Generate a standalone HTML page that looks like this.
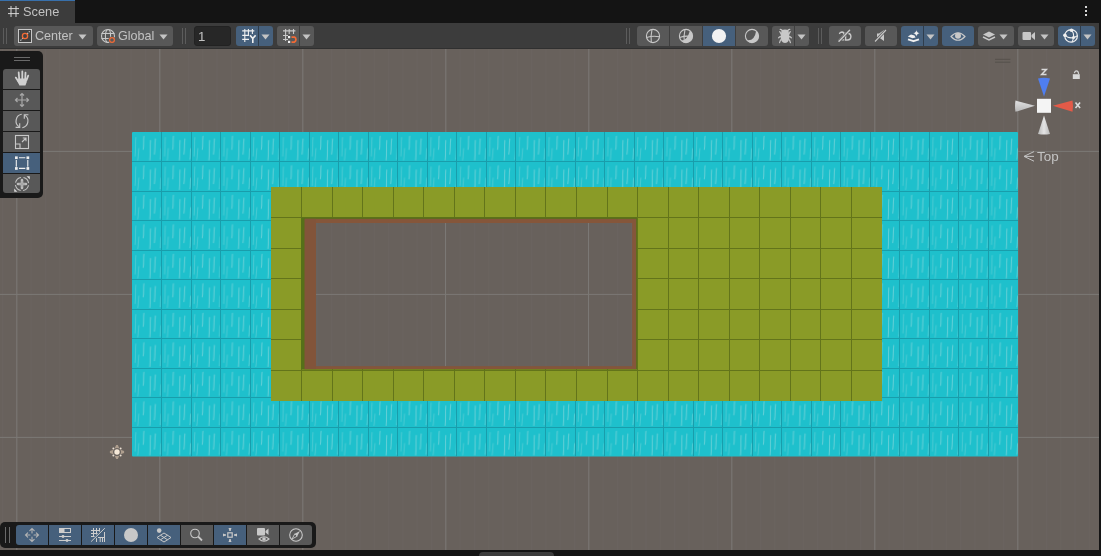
<!DOCTYPE html>
<html><head><meta charset="utf-8">
<style>
*{box-sizing:border-box}
html,body{margin:0;padding:0}
body{width:1101px;height:556px;background:#141414;overflow:hidden;position:relative;font-family:"Liberation Sans",sans-serif;color:#c4c4c4}
.a{position:absolute}
.tab{left:0;top:0;width:75px;height:23px;background:#3c3c3c;border-top:1px solid #3870ab}
.tb{left:0;top:23px;width:1099px;height:25.5px;background:#3c3c3c;border-bottom:1px solid #303030}
.btn{position:absolute;top:26px;height:20px;background:#585858;border-radius:3px}
.sel{background:#46607c}
.scene{left:0;top:48px;width:1099px;height:502px;background:#68615c;overflow:hidden}
.grip{position:absolute;width:1px;background:#5c5c5c}
.txt{position:absolute;font-size:12.5px;color:#c2c2c2;white-space:nowrap;-webkit-font-smoothing:antialiased;will-change:transform}
</style></head><body>

<!-- tab strip -->
<div class="a tab"></div>
<div class="txt" style="left:23.3px;top:4.0px;font-size:12.8px">Scene</div>
<svg class="a" style="left:7px;top:5px" width="13" height="13" viewBox="0 0 13 13"><g stroke="#d4d4d4" stroke-width="1" fill="none"><path d="M4 1V12M9 1V12M1 3.6H12M1 8.6H12"/></g></svg>
<div class="a" style="left:1085px;top:6px;width:2px;height:2px;background:#d8d8d8"></div>
<div class="a" style="left:1085px;top:10px;width:2px;height:2px;background:#d8d8d8"></div>
<div class="a" style="left:1085px;top:14px;width:2px;height:2px;background:#d8d8d8"></div>

<!-- scene -->
<div class="a scene">
<svg width="1099" height="502" viewBox="0 48 1099 502" style="position:absolute;left:0;top:0">
  <defs>
    <pattern id="minor" x="16.3" y="7.9" width="14.3" height="14.3" patternUnits="userSpaceOnUse">
      <path d="M0.5 0V14.3" stroke="#6a635f" stroke-width="1"/>
    </pattern>
    <pattern id="major" x="16.3" y="7.9" width="143" height="143" patternUnits="userSpaceOnUse">
      <path d="M0.5 0V143M0 0.5H143" stroke="#7b7875" stroke-width="1"/>
    </pattern>
    <pattern id="water" x="132" y="132" width="29.533" height="29.5" patternUnits="userSpaceOnUse">
      <rect width="29.533" height="29.5" fill="#1ec0cc"/>
      <g stroke="#62cfd6" stroke-width="1.05" fill="none" stroke-linecap="round">
        <path d="M3.8 5.5C3.1 11 3.9 17 3.1 24" opacity="0.6"/>
        <path d="M6.8 16.5C6.2 21 6.5 24 5.8 28" opacity="0.6"/>
        <path d="M11.9 4.2C11.3 9 12 13 11.2 17.4"/>
        <path d="M18.5 8.5C17.8 15 18.7 21 17.9 28"/>
        <path d="M23.4 6.8C22.7 12 23.3 17 22.4 22.2"/>
        <path d="M29.2 16.6C28.6 21 29.1 24 28.4 27.2" opacity="0.8"/>
      </g>
    </pattern>
    <clipPath id="holeclip"><rect x="316" y="223" width="316.2" height="143.2"/></clipPath>
  </defs>
  <rect x="0" y="48.5" width="1099" height="502" fill="#68615c"/>
  <rect x="0" y="48.5" width="1099" height="502" fill="url(#minor)"/>
  <rect x="0" y="48.5" width="1099" height="502" fill="url(#major)"/>
  <rect x="132" y="132" width="886" height="324.5" fill="url(#water)" rx="1"/>
  <path d="M161.5 132V456.5M191.5 132V456.5M220.5 132V456.5M250.5 132V456.5M279.5 132V456.5M309.5 132V456.5M338.5 132V456.5M368.5 132V456.5M397.5 132V456.5M427.5 132V456.5M456.5 132V456.5M486.5 132V456.5M515.5 132V456.5M545.5 132V456.5M575.5 132V456.5M604.5 132V456.5M634.5 132V456.5M663.5 132V456.5M693.5 132V456.5M722.5 132V456.5M752.5 132V456.5M781.5 132V456.5M811.5 132V456.5M840.5 132V456.5M870.5 132V456.5M899.5 132V456.5M929.5 132V456.5M958.5 132V456.5M988.5 132V456.5M132 161.5H1018M132 191.5H1018M132 220.5H1018M132 250.5H1018M132 279.5H1018M132 309.5H1018M132 338.5H1018M132 368.5H1018M132 397.5H1018M132 427.5H1018" stroke="#199dab" stroke-width="1"/>
  <rect x="271" y="187" width="611" height="214" fill="#8a9b27"/>
  <path d="M301.5 187V401M332.5 187V401M362.5 187V401M393.5 187V401M423.5 187V401M454.5 187V401M484.5 187V401M515.5 187V401M545.5 187V401M576.5 187V401M607.5 187V401M637.5 187V401M668.5 187V401M698.5 187V401M729.5 187V401M759.5 187V401M790.5 187V401M820.5 187V401M851.5 187V401M271 217.5H882M271 248.5H882M271 278.5H882M271 309.5H882M271 339.5H882M271 370.5H882" stroke="#63741a" stroke-width="1"/>
  <rect x="301" y="217.5" width="336" height="152" fill="#567018"/>
  <rect x="304.7" y="218.8" width="331.5" height="150.3" fill="#85563a"/>
  <rect x="304.7" y="218.8" width="11.3" height="150.3" fill="#82543a"/>
  <rect x="316" y="223" width="316.2" height="143.2" fill="#68615c"/>
  <g clip-path="url(#holeclip)">
    <rect x="316" y="223" width="316.2" height="143.2" fill="url(#minor)"/>
    <path d="M445.5 223V366.2M588.5 223V366.2M316 294.4H632.2" stroke="#7b7875" stroke-width="1"/>
  </g>
</svg>
</div>
<!-- toolbar -->
<div class="a tb"></div>
<div class="grip" style="left:2.8px;top:28px;height:16px"></div><div class="grip" style="left:5.9px;top:28px;height:16px"></div>
<div class="btn" style="left:14px;width:79.0px;border-radius:3px"></div>
<div class="btn" style="left:97px;width:76.0px;border-radius:3px"></div>
<div class="grip" style="left:181.9px;top:28px;height:16px"></div><div class="grip" style="left:185.0px;top:28px;height:16px"></div>
<div class="a" style="left:194px;top:26px;width:36.7px;height:19.7px;background:#272727;border:1px solid #222;border-radius:3px"></div>
<div class="txt" style="left:198.3px;top:28.6px;font-size:13.2px">1</div>
<div class="btn sel" style="left:236px;width:36.6px;border-radius:3px"></div>
<div class="a" style="left:257.7px;top:26px;width:1px;height:20px;background:#2f3d4c"></div>
<div class="btn" style="left:277px;width:36.7px;border-radius:3px"></div>
<div class="a" style="left:299.1px;top:26px;width:1px;height:20px;background:#3e3e3e"></div>
<div class="grip" style="left:626.0px;top:28px;height:16px"></div><div class="grip" style="left:629.1px;top:28px;height:16px"></div>
<div class="btn" style="left:637px;width:130.7px;border-radius:3px"></div>
<div class="btn sel" style="left:702.4px;width:33.1px;border-radius:0"></div>
<div class="a" style="left:669.0px;top:26px;width:1px;height:20px;background:#3e3e3e"></div>
<div class="a" style="left:701.9px;top:26px;width:1px;height:20px;background:#3e3e3e"></div>
<div class="a" style="left:735.0px;top:26px;width:1px;height:20px;background:#3e3e3e"></div>
<div class="btn" style="left:772px;width:37.0px;border-radius:3px"></div>
<div class="a" style="left:794.0px;top:26px;width:1px;height:20px;background:#3e3e3e"></div>
<div class="grip" style="left:818.1px;top:28px;height:16px"></div><div class="grip" style="left:821.2px;top:28px;height:16px"></div>
<div class="btn" style="left:829px;width:32.0px;border-radius:3px"></div>
<div class="btn" style="left:865px;width:32.0px;border-radius:3px"></div>
<div class="btn sel" style="left:901px;width:37.0px;border-radius:3px"></div>
<div class="a" style="left:922.9px;top:26px;width:1px;height:20px;background:#2f3d4c"></div>
<div class="btn sel" style="left:942px;width:32.0px;border-radius:3px"></div>
<div class="btn" style="left:978px;width:36.0px;border-radius:3px"></div>
<div class="btn" style="left:1018px;width:36.0px;border-radius:3px"></div>
<div class="btn sel" style="left:1058px;width:37.0px;border-radius:3px"></div>
<div class="a" style="left:1079.8px;top:26px;width:1px;height:20px;background:#2f3d4c"></div>
<div class="txt" style="left:35.3px;top:29.2px;font-size:12.6px">Center</div>
<div class="txt" style="left:117.8px;top:29.2px;font-size:12.6px">Global</div>
<svg class="a" style="left:78.0px;top:33.8px" width="9" height="6" viewBox="0 0 9 6"><path d="M0.5 0.5H8.5L4.5 5.5Z" fill="#c4c4c4"/></svg>
<svg class="a" style="left:159.0px;top:33.8px" width="9" height="6" viewBox="0 0 9 6"><path d="M0.5 0.5H8.5L4.5 5.5Z" fill="#c4c4c4"/></svg>
<svg class="a" style="left:261.0px;top:33.8px" width="9" height="6" viewBox="0 0 9 6"><path d="M0.5 0.5H8.5L4.5 5.5Z" fill="#c4c4c4"/></svg>
<svg class="a" style="left:302.0px;top:33.8px" width="9" height="6" viewBox="0 0 9 6"><path d="M0.5 0.5H8.5L4.5 5.5Z" fill="#c4c4c4"/></svg>
<svg class="a" style="left:797.0px;top:33.8px" width="9" height="6" viewBox="0 0 9 6"><path d="M0.5 0.5H8.5L4.5 5.5Z" fill="#c4c4c4"/></svg>
<svg class="a" style="left:925.8px;top:33.8px" width="9" height="6" viewBox="0 0 9 6"><path d="M0.5 0.5H8.5L4.5 5.5Z" fill="#c4c4c4"/></svg>
<svg class="a" style="left:999.0px;top:33.8px" width="9" height="6" viewBox="0 0 9 6"><path d="M0.5 0.5H8.5L4.5 5.5Z" fill="#c4c4c4"/></svg>
<svg class="a" style="left:1039.6px;top:33.8px" width="9" height="6" viewBox="0 0 9 6"><path d="M0.5 0.5H8.5L4.5 5.5Z" fill="#c4c4c4"/></svg>
<svg class="a" style="left:1083.3px;top:33.8px" width="9" height="6" viewBox="0 0 9 6"><path d="M0.5 0.5H8.5L4.5 5.5Z" fill="#c4c4c4"/></svg>
<svg class="a" style="left:17px;top:28px" width="16" height="16" viewBox="0 0 16 16"><rect x="1.5" y="1.5" width="13" height="13" fill="#404040" stroke="#c8c8c8" stroke-width="1"/><path d="M3.3 12.7L6 10M10 6L12.7 3.3" stroke="#c8c8c8" stroke-width="1.1" stroke-dasharray="1.6 1"/><circle cx="8" cy="8" r="2.6" fill="none" stroke="#f26a35" stroke-width="1.3"/></svg>
<svg class="a" style="left:100px;top:28px" width="17" height="17" viewBox="0 0 17 17"><circle cx="8" cy="8" r="6.5" fill="none" stroke="#c8c8c8" stroke-width="1.1"/><ellipse cx="8" cy="8" rx="2.6" ry="6.5" fill="none" stroke="#c8c8c8" stroke-width="1.1"/><path d="M1.5 5.5H14.5M1.5 10.5H14.5" stroke="#c8c8c8" stroke-width="1.1"/><circle cx="12" cy="12" r="3.6" fill="#585858"/><circle cx="12" cy="12" r="2.4" fill="none" stroke="#f26a35" stroke-width="1.2"/></svg>
<svg class="a" style="left:241px;top:28px" width="17" height="16" viewBox="0 0 17 16"><g stroke="#f0f0f0" stroke-width="1.1"><path d="M3.8 1V14M7.4 1V7M11.4 1V6M1.2 2.9H13.3M1.2 7.4H8M1.2 11.4H8"/></g><path d="M9 7.2L11.8 10.6L14.6 7.2M11.8 10.6V15" stroke="#f0f0f0" stroke-width="1.6" fill="none"/></svg>
<svg class="a" style="left:282px;top:28px" width="17" height="17" viewBox="0 0 17 17"><g stroke="#c8c8c8" stroke-width="1.1"><path d="M3.6 1V13M7.2 1V6M11.5 1V6M1 2.9H13.4M1 7.5H6M1 11.5H6"/></g><rect x="6" y="8" width="2.2" height="2.2" fill="#f0f0f0"/><rect x="6" y="12.8" width="2.2" height="2.2" fill="#f0f0f0"/><path d="M9.5 9.1H12.5A2.9 2.9 0 0 1 12.5 14.1H9.5" fill="none" stroke="#f26a35" stroke-width="1.7"/></svg>
<svg class="a" style="left:645px;top:28px" width="16" height="16" viewBox="0 0 16 16"><circle cx="8" cy="8" r="6.6" fill="none" stroke="#c8c8c8" stroke-width="1.1"/><path d="M7 1.5Q5.5 8 6.3 14.5M1.6 9.5Q8 7.5 14.4 8.8" fill="none" stroke="#c8c8c8" stroke-width="1.1"/></svg>
<svg class="a" style="left:678px;top:28px" width="16" height="16" viewBox="0 0 16 16"><circle cx="8" cy="8" r="6.6" fill="none" stroke="#c8c8c8" stroke-width="1.1"/><path d="M14.6 8A6.6 6.6 0 0 1 3 12.5Q9 13 12 2.5A6.6 6.6 0 0 1 14.6 8Z" fill="#c8c8c8"/><path d="M7 1.5Q5.5 8 6.3 14.5M1.6 9.5Q8 7.5 12 8.5" fill="none" stroke="#c8c8c8" stroke-width="1.1"/></svg>
<svg class="a" style="left:711px;top:28px" width="16" height="16" viewBox="0 0 16 16"><circle cx="8" cy="8" r="7.1" fill="#f2f2f2"/></svg>
<svg class="a" style="left:744px;top:28px" width="16" height="16" viewBox="0 0 16 16"><circle cx="8" cy="8" r="6.6" fill="none" stroke="#c8c8c8" stroke-width="1.1"/><path d="M14.6 8A6.6 6.6 0 0 1 2.8 12.2Q10.5 13.5 12.2 2.8A6.6 6.6 0 0 1 14.6 8Z" fill="#c8c8c8"/></svg>
<svg class="a" style="left:777px;top:28px" width="16" height="16" viewBox="0 0 16 16"><path d="M4.6 2Q8 1.1 11.4 2L12.4 8Q12.6 14.9 8 14.9Q3.4 14.9 3.6 8Z" fill="#c8c8c8"/><g stroke="#c8c8c8" stroke-width="1.2" fill="none" stroke-linecap="round"><path d="M3.2 1.4Q4.6 1.6 5.5 2.8M12.8 1.4Q11.4 1.6 10.5 2.8M2.8 3.6L4.5 6.8M13.2 3.6L11.5 6.8M1.6 9.8Q2.4 8.6 4 8.6M14.4 9.8Q13.6 8.6 12 8.6M2.6 14.6L3.6 11.8M13.4 14.6L12.4 11.8"/></g></svg>
<svg class="a" style="left:837px;top:29px" width="16" height="14" viewBox="0 0 16 14"><path d="M2.4 5Q2.8 3 4.9 3Q7 3.2 7 5Q6.8 6.6 4.2 9L2.5 10.9H7.3" fill="none" stroke="#cacaca" stroke-width="1.4"/><path d="M8.6 4.2V11H10.3Q13.9 11 13.9 7.6Q13.9 4.2 10.3 4.2Z" fill="none" stroke="#cacaca" stroke-width="1.4"/><path d="M2 12.3L12.6 1.2" stroke="#585858" stroke-width="2.8"/><path d="M2 12.3L12.6 1.2" stroke="#cacaca" stroke-width="1.4" stroke-linecap="round"/></svg>
<svg class="a" style="left:873px;top:29px" width="16" height="14" viewBox="0 0 16 14"><path d="M4 4.5H6L11 1V12L6 8.5H4Z" fill="#c8c8c8"/><path d="M2 12.5L13 1" stroke="#585858" stroke-width="2.6"/><path d="M2 12.5L13 1" stroke="#c8c8c8" stroke-width="1.1"/></svg>
<svg class="a" style="left:906px;top:28px" width="16" height="16" viewBox="0 0 16 16"><path d="M1.8 8.6L5 6.4L8.5 7.6L9.6 9.4L6.5 10.2Z" fill="#f0f0f0"/><path d="M2 11.3L7.5 13.2L13 11.3" fill="none" stroke="#f0f0f0" stroke-width="1.9" stroke-linejoin="round"/><path d="M10.4 1.6Q10.9 4.8 14 5.3Q10.9 5.8 10.4 9Q9.9 5.8 6.8 5.3Q9.9 4.8 10.4 1.6Z" fill="#f0f0f0" stroke="#46607c" stroke-width="0.6"/></svg>
<svg class="a" style="left:950px;top:30px" width="16" height="13" viewBox="0 0 16 13"><path d="M1 6.5Q8 -1 15 6.5Q8 14 1 6.5Z" fill="none" stroke="#c8c8c8" stroke-width="1.1"/><circle cx="8" cy="5.8" r="3" fill="#c8c8c8"/></svg>
<svg class="a" style="left:982px;top:30px" width="14" height="12" viewBox="0 0 14 12"><path d="M1 4.5L7 1.5L13 4.5L7 7.5Z" fill="#c8c8c8"/><path d="M1 7L7 10L13 7" fill="none" stroke="#c8c8c8" stroke-width="1.5"/></svg>
<svg class="a" style="left:1022px;top:31px" width="14" height="10" viewBox="0 0 14 10"><rect x="0.5" y="1" width="8.5" height="8" rx="1" fill="#c8c8c8"/><path d="M9.5 4L13 1V9L9.5 6Z" fill="#c8c8c8"/></svg>
<svg class="a" style="left:1063px;top:28px" width="16" height="16" viewBox="0 0 16 16"><circle cx="8.1" cy="7.9" r="6.3" fill="none" stroke="#f0f0f0" stroke-width="1.2"/><path d="M1.9 7.3Q6 10.8 10.5 9.5Q13 8.8 14.4 7.6M8.4 2.1Q11.2 5 10.5 9.5Q10 12.5 9 14.2" fill="none" stroke="#f0f0f0" stroke-width="1.1"/><circle cx="8.4" cy="2.2" r="1.8" fill="#f0f0f0"/><circle cx="1.9" cy="7.3" r="1.8" fill="#f0f0f0"/><circle cx="10.5" cy="9.5" r="1.6" fill="#f0f0f0"/></svg>
<div class="a" style="left:0;top:51px;width:43px;height:147px;background:#191919;border-radius:0 5px 5px 0"></div>
<div class="a" style="left:14px;top:56.7px;width:16px;height:1px;background:#6a6a6a"></div>
<div class="a" style="left:14px;top:60.2px;width:16px;height:1px;background:#6a6a6a"></div>
<div class="a" style="left:3px;top:69.2px;width:37px;height:19.8px;background:#585858;border-radius:3px 3px 0 0"></div>
<div class="a" style="left:3px;top:90.1px;width:37px;height:19.8px;background:#585858;border-radius:0"></div>
<div class="a" style="left:3px;top:111.0px;width:37px;height:19.8px;background:#585858;border-radius:0"></div>
<div class="a" style="left:3px;top:131.9px;width:37px;height:19.8px;background:#585858;border-radius:0"></div>
<div class="a" style="left:3px;top:152.8px;width:37px;height:19.8px;background:#46607c;border-radius:0"></div>
<div class="a" style="left:3px;top:173.7px;width:37px;height:19.8px;background:#585858;border-radius:0 0 3px 3px"></div>
<svg class="a" style="left:12px;top:68px" width="20" height="22" viewBox="0 0 20 22"><g stroke="#d0d0d0" stroke-width="1.8" stroke-linecap="round" fill="none"><path d="M3.8 9.6L7 14.5M6.7 4.5L7.2 11M10.3 3.5V11M13.5 4.7L13.2 11M16.2 7.6L14.6 12"/></g><path d="M6.2 10.5H15.2L14.6 14.5L13.4 17.6H7.4L5.6 13.5Z" fill="#d0d0d0"/></svg>
<svg class="a" style="left:14px;top:92px" width="16" height="16" viewBox="0 0 16 16"><g stroke="#a8a8a8" stroke-width="1.2" fill="none"><path d="M8 1.5V14.5M1.5 8H14.5M6 3.5L8 1.5L10 3.5M6 12.5L8 14.5L10 12.5M3.5 6L1.5 8L3.5 10M12.5 6L14.5 8L12.5 10"/></g></svg>
<svg class="a" style="left:14px;top:113px" width="16" height="16" viewBox="0 0 16 16"><g stroke="#c8c8c8" stroke-width="1.15" fill="none"><path d="M7.7 1.3A6.8 6.8 0 0 0 5 13.6"/><path d="M8.3 14.7A6.8 6.8 0 0 0 11 2.4"/><path d="M5.7 10.2V14.3H1.6M10.3 5.8V1.7H14.4"/></g></svg>
<svg class="a" style="left:14px;top:134px" width="16" height="16" viewBox="0 0 16 16"><g stroke="#c8c8c8" stroke-width="1.1" fill="none"><rect x="1.5" y="1.5" width="13" height="13"/><path d="M1.5 10H6V14.5"/><path d="M8 8L12 4M8.8 4H12V7.2"/></g></svg>
<svg class="a" style="left:14px;top:155px" width="16" height="16" viewBox="0 0 16 16"><g stroke="#f0f0f0" stroke-width="1.1"><path d="M2.3 5V11.7M13.8 5V11.7M5 2.7H11.3M5 13.4H11.3"/></g><g fill="#f0f0f0"><rect x="1" y="1.4" width="2.7" height="2.7"/><rect x="12.5" y="1.4" width="2.7" height="2.7"/><rect x="1" y="12.1" width="2.7" height="2.7"/><rect x="12.5" y="12.1" width="2.7" height="2.7"/></g></svg>
<svg class="a" style="left:14px;top:176px" width="16" height="16" viewBox="0 0 16 16"><circle cx="8" cy="8" r="6.6" fill="none" stroke="#c4c4c4" stroke-width="1.1" stroke-dasharray="7.9 2.47" stroke-dashoffset="9.1"/><path d="M8 4V12M4 8H12" stroke="#bdbdbd" stroke-width="2.6" stroke-linecap="round"/><path d="M8 5V11M5 8H11" stroke="#9a9a9a" stroke-width="0.8"/><path d="M12.6 0.2H15.8V3.4Z M0.2 12.6V15.8H3.4Z" fill="#d8d8d8"/></svg>
<div class="a" style="left:0;top:522px;width:315.5px;height:25.5px;background:#191919;border-radius:5px"></div>
<div class="a" style="left:4.5px;top:527px;width:1px;height:16px;background:#6a6a6a"></div>
<div class="a" style="left:8.5px;top:527px;width:1px;height:16px;background:#6a6a6a"></div>
<div class="a" style="left:16px;top:525px;width:32px;height:20px;background:#46607c;border-radius:3px 0 0 3px"></div>
<div class="a" style="left:49px;top:525px;width:32px;height:20px;background:#46607c;border-radius:0"></div>
<div class="a" style="left:82px;top:525px;width:32px;height:20px;background:#46607c;border-radius:0"></div>
<div class="a" style="left:115px;top:525px;width:32px;height:20px;background:#46607c;border-radius:0"></div>
<div class="a" style="left:148px;top:525px;width:32px;height:20px;background:#46607c;border-radius:0"></div>
<div class="a" style="left:181px;top:525px;width:32px;height:20px;background:#585858;border-radius:0"></div>
<div class="a" style="left:214px;top:525px;width:32px;height:20px;background:#46607c;border-radius:0"></div>
<div class="a" style="left:247px;top:525px;width:32px;height:20px;background:#585858;border-radius:0"></div>
<div class="a" style="left:280px;top:525px;width:32px;height:20px;background:#585858;border-radius:0 3px 3px 0"></div>
<svg class="a" style="left:24px;top:527px" width="16" height="16" viewBox="0 0 16 16"><g stroke="#b4b4b4" stroke-width="1.1" fill="none" stroke-linecap="round"><path d="M8 1.5V6M8 10V14.5M1.5 8H6M10 8H14.5M5.8 3.7L8 1.5L10.2 3.7M5.8 12.3L8 14.5L10.2 12.3M3.7 5.8L1.5 8L3.7 10.2M12.3 5.8L14.5 8L12.3 10.2"/></g></svg>
<svg class="a" style="left:57px;top:527px" width="16" height="16" viewBox="0 0 16 16"><rect x="2.5" y="1.5" width="11" height="4" fill="none" stroke="#cdcdcd" stroke-width="1"/><rect x="2.5" y="1.5" width="5" height="4" fill="#cdcdcd"/><g stroke="#cdcdcd" stroke-width="1"><path d="M2 9.5H14M2 13.5H14"/></g><circle cx="6" cy="9.5" r="1.4" fill="#cdcdcd"/><circle cx="10" cy="13.5" r="1.4" fill="#cdcdcd"/></svg>
<svg class="a" style="left:90px;top:527px" width="16" height="16" viewBox="0 0 16 16"><g stroke="#cdcdcd" stroke-width="1"><path d="M3.5 1V10M6.5 1V15M9.5 1V7M10.2 10.5V15M12.5 10.5V15M14.5 5V15M1 3.5H10M1 6.5H9M1 9.5H7.5M8 10.5H14.5"/></g><path d="M1.1 14.6L14.8 1.2" stroke="#46607c" stroke-width="2.4"/><path d="M1.1 14.6L14.8 1.2" stroke="#cdcdcd" stroke-width="1"/></svg>
<svg class="a" style="left:123px;top:527px" width="16" height="16" viewBox="0 0 16 16"><circle cx="8" cy="8" r="7" fill="#c8c8c8"/></svg>
<svg class="a" style="left:156px;top:527px" width="16" height="16" viewBox="0 0 16 16"><circle cx="3.2" cy="3.6" r="2.3" fill="#c8c8c8"/><g stroke="#c8c8c8" stroke-width="1" fill="none"><path d="M8 6L15 10.5L8 15L1 10.5Z M4.5 8.25L11.5 12.75M11.5 8.25L4.5 12.75"/></g></svg>
<svg class="a" style="left:188px;top:527px" width="16" height="16" viewBox="0 0 16 16"><circle cx="7" cy="6.5" r="4.3" fill="none" stroke="#c8c8c8" stroke-width="1.1"/><path d="M10.2 9.7L14 13.5" stroke="#c8c8c8" stroke-width="1.8"/></svg>
<svg class="a" style="left:222px;top:527px" width="16" height="16" viewBox="0 0 16 16"><rect x="5.8" y="5.8" width="4.4" height="4.4" fill="none" stroke="#c8c8c8" stroke-width="1.2"/><g fill="#c8c8c8"><path d="M6.5 1H9.5L8.8 3V4H7.2V3Z"/><path d="M6.5 15H9.5L8.8 13V12H7.2V13Z"/><path d="M1 6.5V9.5L3 8.8H4V7.2H3Z"/><path d="M15 6.5V9.5L13 8.8H12V7.2H13Z"/></g></svg>
<svg class="a" style="left:255px;top:527px" width="16" height="16" viewBox="0 0 16 16"><rect x="2" y="1" width="8" height="7.5" rx="1" fill="#c8c8c8"/><path d="M10.5 4L13.5 1.5V8L10.5 5.5Z" fill="#c8c8c8"/><path d="M4 12Q9 7.5 14 12Q9 16.5 4 12Z" fill="#585858" stroke="#c8c8c8" stroke-width="1.1"/><circle cx="9" cy="12" r="1.8" fill="#c8c8c8"/></svg>
<svg class="a" style="left:288px;top:527px" width="16" height="16" viewBox="0 0 16 16"><circle cx="8" cy="8" r="6.3" fill="none" stroke="#c8c8c8" stroke-width="1.1"/><path d="M12 4L9.2 9.2L6.8 6.8Z" fill="#c8c8c8"/><path d="M4 12L6.8 6.8L9.2 9.2Z" fill="none" stroke="#c8c8c8" stroke-width="0.9"/></svg>
<div class="a" style="left:479px;top:552px;width:75px;height:8px;background:#3c3c3c;border-radius:4px"></div>
<svg class="a" style="left:990px;top:55px" width="105" height="85" viewBox="990 55 105 85">
<defs>
<linearGradient id="gl" x1="0" y1="0" x2="0" y2="1"><stop offset="0" stop-color="#e0e0e0"/><stop offset="1" stop-color="#b8b8b8"/></linearGradient>
<linearGradient id="gb" x1="0" y1="0" x2="1" y2="0"><stop offset="0" stop-color="#b8b8b8"/><stop offset="0.5" stop-color="#e4e4e4"/><stop offset="1" stop-color="#b8b8b8"/></linearGradient>
</defs>
<path d="M995 59.3H1010.4M995 62.2H1010.4" stroke="#55504c" stroke-width="1"/>
<path d="M1038 78.5Q1044 77 1050 78.5L1044 96.5Z" fill="#4f7ef0"/>
<path d="M1015.5 100.6Q1014.5 106 1015.5 111.8L1035 105.8Z" fill="url(#gl)"/>
<path d="M1072.5 100.6Q1073.5 106 1072.5 111.8L1052.8 105.8Z" fill="#e35a48"/>
<path d="M1038 134Q1044 135 1050 134L1044 115.5Z" fill="url(#gb)"/>
<rect x="1037" y="98.8" width="14" height="14" fill="#f4f4f4"/>
<path d="M1041.5 69.4H1046.4L1041.6 74.6H1046.5" fill="none" stroke="#dadada" stroke-width="1.5"/>
<path d="M1075.5 102.6L1080.1 108M1080.1 102.6L1075.5 108" stroke="#dadada" stroke-width="1.6"/>
<rect x="1072.8" y="74.2" width="7" height="4.8" fill="#d8d8d8"/>
<path d="M1074.4 73.2Q1074.8 70.8 1076.5 70.8Q1078.4 70.8 1078.6 74" fill="none" stroke="#d0d0d0" stroke-width="1.2"/>
</svg>
<svg class="a" style="left:1022px;top:150px" width="14" height="13" viewBox="0 0 14 13"><path d="M12 1.6L2 6.4L12 11.2M2 6.4H12" fill="none" stroke="#c4c4c4" stroke-width="1"/></svg>
<div class="txt" style="left:1036.8px;top:148.6px;font-size:13.4px;color:#c4c4c4">Top</div>
<svg class="a" style="left:109px;top:444px" width="16" height="16" viewBox="0 0 16 16"><circle cx="8" cy="8" r="2.7" fill="#f6e9d8"/><g fill="#ae9e8e"><path d="M7.1 0.9L8.9 0.9L10.3 4.5Q8 3.4 5.7 4.5Z"/><path d="M7.1 0.9L8.9 0.9L10.3 4.5Q8 3.4 5.7 4.5Z" transform="rotate(90 8 8)"/><path d="M7.1 0.9L8.9 0.9L10.3 4.5Q8 3.4 5.7 4.5Z" transform="rotate(180 8 8)"/><path d="M7.1 0.9L8.9 0.9L10.3 4.5Q8 3.4 5.7 4.5Z" transform="rotate(270 8 8)"/></g><g fill="#eadfd2"><circle cx="4.4" cy="4.4" r="1"/><circle cx="11.6" cy="4.4" r="1"/><circle cx="4.4" cy="11.6" r="1"/><circle cx="11.6" cy="11.6" r="1"/></g></svg>




</body></html>
